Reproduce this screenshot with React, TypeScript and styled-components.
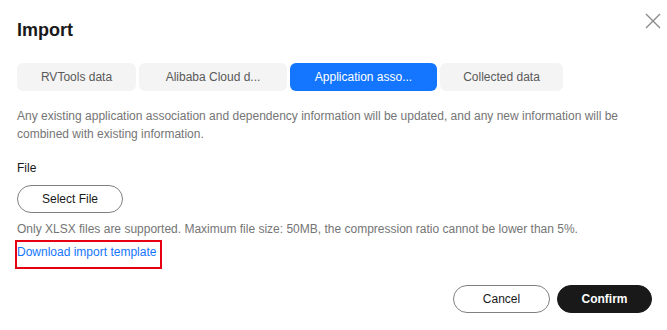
import React from "react";
import styled, { createGlobalStyle } from "styled-components";

const Global = createGlobalStyle`
  html, body { margin: 0; padding: 0; background: #ffffff; }
  body { font-family: "Liberation Sans", Arial, sans-serif; }
  * { box-sizing: border-box; }
`;

const Dialog = styled.div`
  width: 667px;
  height: 330px;
  background: #ffffff;
  padding: 18px 15px 0 17px;
  position: relative;
  display: flex;
  flex-direction: column;
`;

const Title = styled.h2`
  margin: 0;
  font-size: 18px;
  line-height: 24px;
  font-weight: 700;
  color: #191919;
`;

const CloseButton = styled.button`
  position: absolute;
  top: 13px;
  right: 6px;
  width: 16px;
  height: 16px;
  padding: 0;
  border: none;
  background: transparent;
  cursor: pointer;
  display: flex;
`;

const Tabs = styled.div`
  display: flex;
  gap: 3px;
  margin-top: 21px;
`;

const Tab = styled.div<{ $active?: boolean; $w: number }>`
  width: ${(p) => p.$w}px;
  height: 28px;
  border-radius: 6px;
  background: ${(p) => (p.$active ? "#1476ff" : "#f4f4f4")};
  color: ${(p) => (p.$active ? "#ffffff" : "#595959")};
  font-size: 12px;
  display: flex;
  align-items: center;
  justify-content: center;
  padding: 0 16px;
  white-space: nowrap;
  overflow: hidden;
`;

const Description = styled.p`
  margin: 16px 0 0;
  font-size: 12px;
  line-height: 18px;
  color: #757575;
  padding-right: 10px;
`;

const Label = styled.div`
  margin-top: 16px;
  font-size: 12px;
  line-height: 18px;
  color: #191919;
`;

const PillButton = styled.button<{ $primary?: boolean; $w: number }>`
  width: ${(p) => p.$w}px;
  height: 28px;
  border-radius: 14px;
  border: 1px solid ${(p) => (p.$primary ? "#191919" : "#808080")};
  background: ${(p) => (p.$primary ? "#191919" : "#ffffff")};
  color: ${(p) => (p.$primary ? "#ffffff" : "#191919")};
  font-family: "Liberation Sans", Arial, sans-serif;
  font-size: 12px;
  font-weight: ${(p) => (p.$primary ? 700 : 400)};
  padding: 0;
  cursor: pointer;
`;

const UploadRow = styled.div`
  margin-top: 8px;
  display: flex;
`;

const Hint = styled.div`
  margin-top: 7px;
  font-size: 12px;
  line-height: 18px;
  color: #757575;
`;

const Highlight = styled.div`
  align-self: flex-start;
  margin: 2px 0 0 -2px;
  border: 2px solid #e60012;
  padding: 1px 4px 6px 0;
`;

const Link = styled.a`
  display: block;
  font-size: 12px;
  line-height: 18px;
  color: #1476ff;
  text-decoration: none;
  cursor: pointer;
`;

const Footer = styled.div`
  display: flex;
  justify-content: flex-end;
  gap: 7px;
  margin-top: 16px;
`;

const tabs = [
  { label: "RVTools data", w: 119 },
  { label: "Alibaba Cloud d...", w: 148 },
  { label: "Application asso...", w: 147, active: true },
  { label: "Collected data", w: 123 },
];

export default function App() {
  return (
    <>
      <Global />
      <Dialog>
        <Title>Import</Title>
        <CloseButton aria-label="Close">
          <svg width="16" height="16" viewBox="0 0 16 16">
            <path d="M1 1 L15 15 M15 1 L1 15" stroke="#8a8a8a" strokeWidth="1.4" fill="none" />
          </svg>
        </CloseButton>
        <Tabs>
          {tabs.map((t) => (
            <Tab key={t.label} $w={t.w} $active={t.active}>
              {t.label}
            </Tab>
          ))}
        </Tabs>
        <Description>
          Any existing application association and dependency information will be updated, and any new information will be
          combined with existing information.
        </Description>
        <Label>File</Label>
        <UploadRow>
          <PillButton $w={106}>Select File</PillButton>
        </UploadRow>
        <Hint>
          Only XLSX files are supported. Maximum file size: 50MB, the compression ratio cannot be lower than 5%.
        </Hint>
        <Highlight>
          <Link>Download import template</Link>
        </Highlight>
        <Footer>
          <PillButton $w={97}>Cancel</PillButton>
          <PillButton $w={95} $primary>
            Confirm
          </PillButton>
        </Footer>
      </Dialog>
    </>
  );
}
